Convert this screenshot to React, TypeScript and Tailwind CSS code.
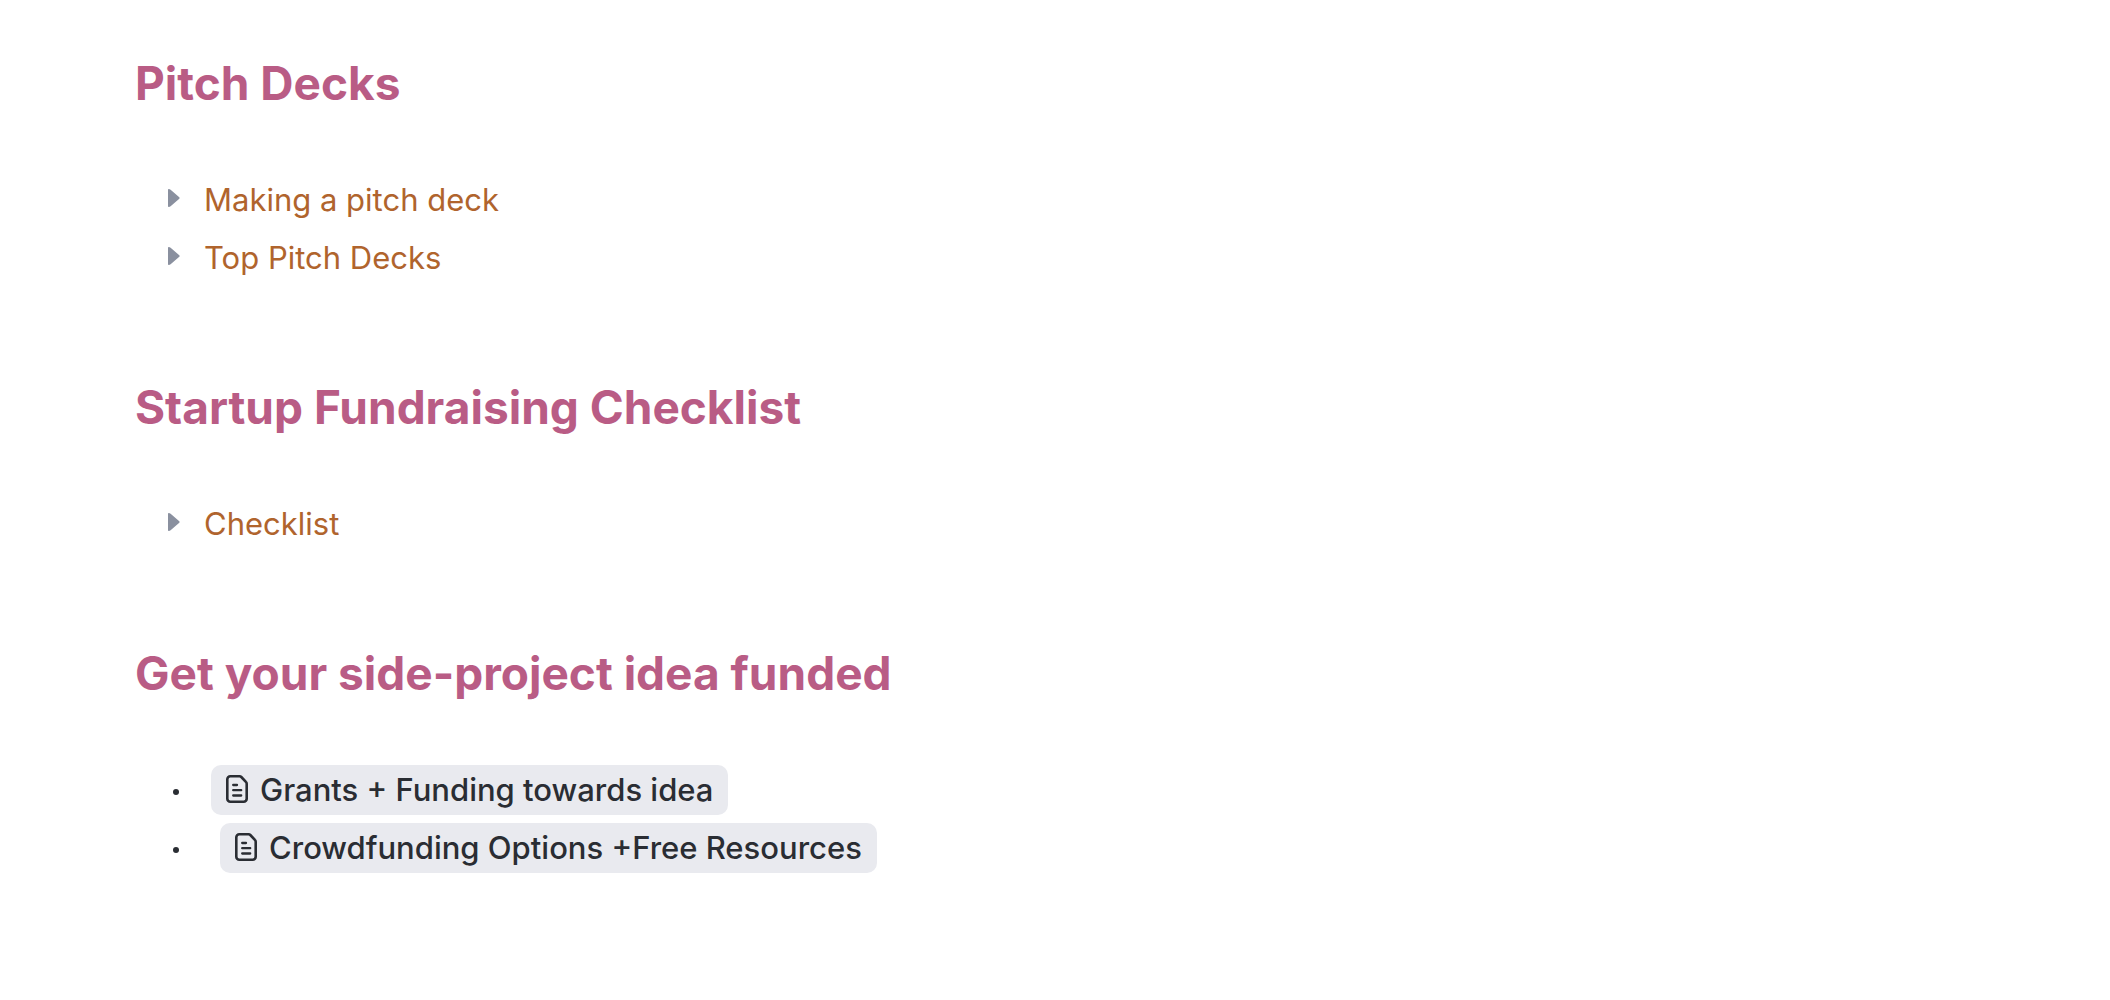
import React from "react";

function Section({ title, children }: { title: string; children: React.ReactNode }) {
  return (
    <section>
      <h2 className="text-[46px] leading-[60px] font-bold text-[#b95c85]">{title}</h2>
      <ul className="mt-[58px]">{children}</ul>
    </section>
  );
}

function Toggle({ label }: { label: string }) {
  return (
    <li className="pl-[33px]">
      <button type="button" className="flex h-[58px] items-center gap-6 text-[31px] text-[#b0642d]">
        <svg className="-mt-1 h-[18px] w-3" viewBox="0 0 12 18" fill="#8a909f" aria-hidden="true">
          <path d="M0 .8Q0 0 .8 0Q1.800 0 2.600 .8L11.300 8.200Q12 9 11.300 9.800L2.600 17.200Q1.800 18 .8 18Q0 18 0 17.200Z" />
        </svg>
        {label}
      </button>
    </li>
  );
}

function Bullet() {
  return <span className="mt-1 size-[6px] rounded-full bg-[#2a2d33]" />;
}

function PageLink({ label }: { label: string }) {
  return (
    <a href="#page" className="flex h-[50px] items-center gap-3 rounded-[10px] bg-[#e9eaef] px-[15px] text-[31px] font-medium text-[#2a2d33]">
      <svg className="-mt-0.5 h-7 w-[22px]" viewBox="0 0 22 28" fill="none" stroke="currentColor" strokeLinecap="round" strokeLinejoin="round" aria-hidden="true">
        <path strokeWidth="2.600" d="M4.300 1.300H13.600Q14.600 1.300 15.300 2L19.900 6.900Q20.700 7.700 20.700 8.700V23.700A3 3 0 0 1 17.700 26.700H4.300A3 3 0 0 1 1.300 23.700V4.300A3 3 0 0 1 4.300 1.300Z" />
        <path strokeWidth="2.300" d="M7.200 10H11M7.200 15.200H15.200M7.200 20.500H15.200" />
      </svg>
      {label}
    </a>
  );
}

export default function App() {
  return (
    <main className="flex min-h-screen flex-col gap-[90px] bg-white px-[135px] pt-[53px] pb-16 font-['Inter',sans-serif]">
      <Section title="Pitch Decks">
        <Toggle label="Making a pitch deck" />
        <Toggle label="Top Pitch Decks" />
      </Section>
      <Section title="Startup Fundraising Checklist">
        <Toggle label="Checklist" />
      </Section>
      <Section title="Get your side-project idea funded">
        <li className="flex h-[58px] items-center gap-8 pl-[38px]">
          <Bullet />
          <PageLink label="Grants + Funding towards idea" />
        </li>
        <li className="flex h-[58px] items-center gap-[41px] pl-[38px]">
          <Bullet />
          <PageLink label="Crowdfunding Options +Free Resources" />
        </li>
      </Section>
    </main>
  );
}
